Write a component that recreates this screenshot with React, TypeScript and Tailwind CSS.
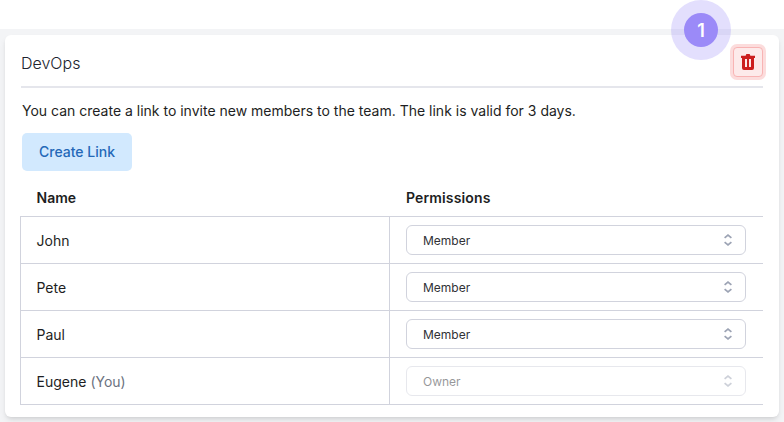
type Member = { name: string; you?: boolean; role: string };

const members: Member[] = [
  { name: "John", role: "Member" },
  { name: "Pete", role: "Member" },
  { name: "Paul", role: "Member" },
  { name: "Eugene", you: true, role: "Owner" },
];

function TrashIcon() {
  return (
    <svg width="14" height="16" viewBox="0 0 14 16" fill="#cc1f1f" fillRule="evenodd">
      <path d="M4.6 1.7 5.4 0h3.2l.8 1.7H14V4h-1v10a2 2 0 0 1-2 2H3a2 2 0 0 1-2-2V4H0V1.7zM4 5v8h2V5zM8 5v8h2V5z" />
    </svg>
  );
}

function Selector() {
  return (
    <svg width="8" height="12" viewBox="0 0 8 12" fill="none" stroke="#9ca3b4" strokeWidth="1.7">
      <path d="M.6 3.9 4 1.1l3.4 2.8M.6 8.1 4 10.9l3.4-2.8" />
    </svg>
  );
}

function RoleSelect({ role, disabled }: { role: string; disabled?: boolean }) {
  return (
    <button
      disabled={disabled}
      className={`flex h-[30px] w-[340px] items-center justify-between rounded-md border border-[#d1d3dd] bg-white pr-[13px] pl-4 text-xs text-[#303136] ${disabled ? "opacity-50" : ""}`}
    >
      <span className="pt-0.5">{role}</span>
      <Selector />
    </button>
  );
}

export default function App() {
  return (
    <div className="relative h-[422px] w-[784px] overflow-hidden bg-[#f3f4f6] font-['Inter',sans-serif] text-sm text-[#1d1e22]">
      <div className="h-[29px] bg-white" />
      <main className="mt-1.5 ml-[5px] h-[382px] w-[774px] rounded-md bg-white pr-4 pl-[15px] shadow-md">
        <header className="ml-px flex h-[53px] items-center justify-between border-b-2 border-[#e5e6ec]">
          <h1 className="pt-1 text-base font-light text-[#20232d]">DevOps</h1>
          <button
            aria-label="Delete team"
            className="mt-[3px] flex size-[30px] items-center justify-center rounded-[4px] border border-[#f8b4b4] bg-[#fdeaea] ring-3 ring-[#fcdcdc]"
          >
            <TrashIcon />
          </button>
        </header>
        <p className="mt-[13px] ml-0.5 leading-5">
          You can create a link to invite new members to the team. The link is valid for 3 days.
        </p>
        <button className="mt-3 ml-0.5 h-[38px] w-[110px] rounded-[5px] bg-[#d2e9fe] font-medium text-[#2468b8]">
          Create Link
        </button>
        <div className="mt-[9px]">
          <div className="flex h-[37px] items-center border-b border-[#d1d3dd] font-semibold">
            <span className="w-[386px] pl-[16.5px]">Name</span>
            <span className="tracking-[0.01em]">Permissions</span>
          </div>
          {members.map((m) => (
            <div key={m.name} className="flex h-[47px] border-b border-l border-[#d1d3dd]">
              <div className="flex w-[369px] items-center border-r border-[#d1d3dd] pt-0.5 pl-[15.5px]">
                {m.name}
                {m.you && <span className="ml-1 text-[#6b7280]">(You)</span>}
              </div>
              <div className="flex items-start pt-2 pl-4">
                <RoleSelect role={m.role} disabled={m.you} />
              </div>
            </div>
          ))}
        </div>
      </main>
      <div className="absolute top-0 left-[671px] flex size-[60px] items-center justify-center rounded-full bg-[#806df5]/22">
        <span className="flex size-[34px] items-center justify-center rounded-full bg-[#9b8af8] pt-0.5 text-lg font-semibold text-white">
          1
        </span>
      </div>
    </div>
  );
}
